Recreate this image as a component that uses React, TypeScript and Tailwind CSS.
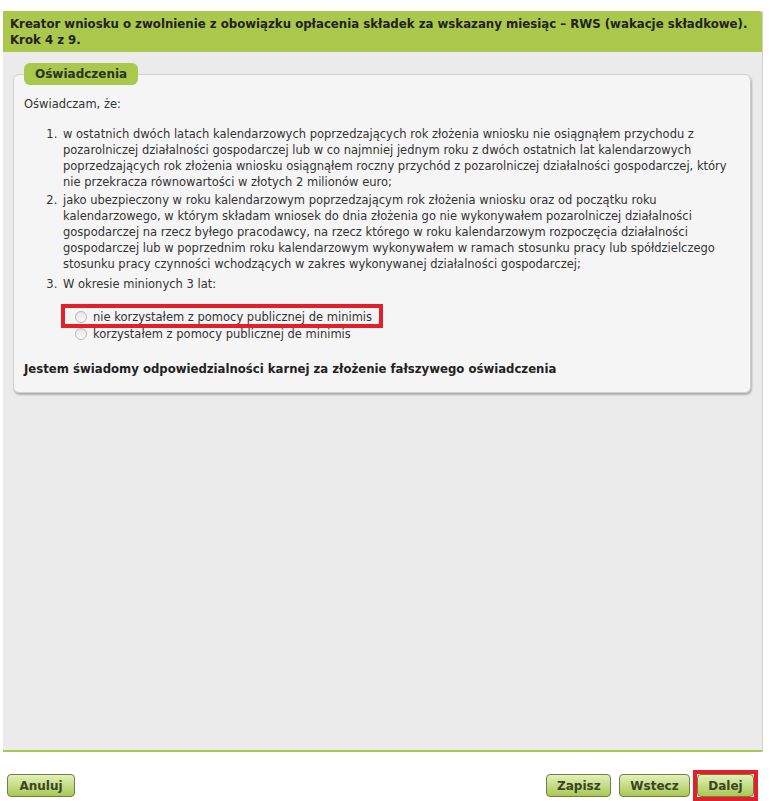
import React from "react";

const Radio = () => (
  <span className="inline-block w-[12px] h-[12px] rounded-full border border-[#b8b8b8] bg-gradient-to-b from-[#e6e6e6] to-[#fbfbfb] mr-[6px] shrink-0" />
);

const Btn = ({ label, className = "" }: { label: string; className?: string }) => (
  <button
    className={`h-[23px] px-[10px] rounded-[4px] border border-[#6f7f4a] bg-gradient-to-b from-[#e3f0b8] to-[#a9c850] text-[12px] font-bold text-[#3b4526] leading-none ${className}`}
  >
    {label}
  </button>
);

export default function App() {
  return (
    <div
      className="w-[770px] h-[801px] bg-white flex flex-col text-[#333]"
      style={{ fontFamily: '"DejaVu Sans", Verdana, sans-serif' }}
    >
      <div className="h-[11px] shrink-0" />
      <div className="mx-[3px] w-[760px] flex flex-col border-r border-[#d0d0d0] bg-[#ebebeb] h-[741px]">
        <div className="bg-[#a9c84c] h-[41px] px-[7px] pt-[5px] text-[11.75px] font-bold leading-[16px] text-[#222] rounded-tr-[3px] whitespace-nowrap">
          Kreator wniosku o zwolnienie z obowiązku opłacenia składek za wskazany miesiąc – RWS (wakacje składkowe).
          <br />
          Krok 4 z 9.
        </div>
        <div className="pt-[11px] px-[10px]">
          <div className="relative w-[738px] pt-[11px]">
            <div className="absolute left-[11px] top-0 h-[22px] px-[11px] rounded-[6px] bg-[#a9c84c] text-[12px] font-bold text-[#2a3320] flex items-center z-10">
              Oświadczenia
            </div>
            <div className="bg-[#f5f5f5] border border-[#cfcfcf] rounded-[6px] shadow-[1px_2px_2px_rgba(0,0,0,0.25)] pt-[21px] pb-[15px] pl-[10px] pr-[10px] text-[11.5px] leading-[16px]">
              <p>Oświadczam, że:</p>
              <ol className="list-decimal pl-[37px] mt-[14px] space-y-[2px]">
                <li className="pl-[2px]">
                  w ostatnich dwóch latach kalendarzowych poprzedzających rok złożenia wniosku nie osiągnąłem przychodu z pozarolniczej działalności gospodarczej lub w co najmniej jednym roku z dwóch ostatnich lat kalendarzowych poprzedzających rok złożenia wniosku osiągnąłem roczny przychód z pozarolniczej działalności gospodarczej, który nie przekracza równowartości w złotych 2 milionów euro;
                </li>
                <li className="pl-[2px]">
                  jako ubezpieczony w roku kalendarzowym poprzedzającym rok złożenia wniosku oraz od początku roku kalendarzowego, w którym składam wniosek do dnia złożenia go nie wykonywałem pozarolniczej działalności gospodarczej na rzecz byłego pracodawcy, na rzecz którego w roku kalendarzowym rozpoczęcia działalności gospodarczej lub w poprzednim roku kalendarzowym wykonywałem w ramach stosunku pracy lub spółdzielczego stosunku pracy czynności wchodzących w zakres wykonywanej działalności gospodarczej;
                </li>
                <li className="pl-[2px] pt-[2px]">W okresie minionych 3 lat:</li>
              </ol>
              <div className="mt-[16px] pl-[37px] flex flex-col">
                <div className="relative flex items-center h-[17px] w-[318px]">
                  <div className="absolute left-0 -top-[4px] w-[322px] h-[24px] border-[4px] border-[#e3202a]" />
                  <span className="pl-[14px] flex items-center">
                    <Radio />
                    nie korzystałem z pomocy publicznej de minimis
                  </span>
                </div>
                <div className="flex items-center h-[17px] pl-[14px]">
                  <Radio />
                  korzystałem z pomocy publicznej de minimis
                </div>
              </div>
              <p className="mt-[19px] font-bold text-[11.7px] text-[#222]">
                Jestem świadomy odpowiedzialności karnej za złożenie fałszywego oświadczenia
              </p>
            </div>
          </div>
        </div>
        <div className="flex-1" />
        <div className="h-[2px] bg-[#a9c84c]" />
      </div>
      <div className="flex items-center justify-between pl-[7px] pr-[12px] pt-[22px]">
        <Btn label="Anuluj" className="w-[68px]" />
        <div className="flex items-center">
          <Btn label="Zapisz" className="w-[65px]" />
          <Btn label="Wstecz" className="w-[71px] ml-[8px]" />
          <div className="border-[4px] border-[#e3202a] flex -my-[4px] ml-[3px]">
            <Btn label="Dalej" className="w-[57px]" />
          </div>
        </div>
      </div>
    </div>
  );
}
